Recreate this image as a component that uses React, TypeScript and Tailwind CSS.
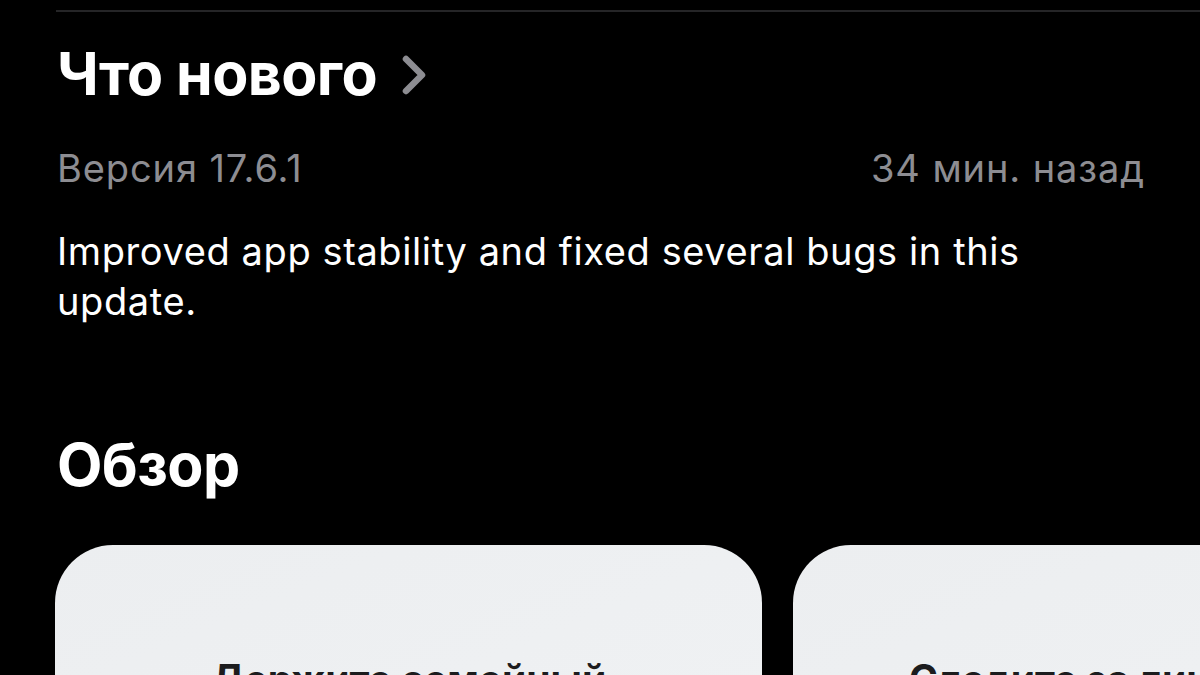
import React from 'react';

const font = { fontFamily: 'Inter, "Noto Sans", sans-serif' };

export default function App() {
  return (
    <div className="w-[1200px] h-[675px] overflow-hidden bg-black text-white" style={font}>
      <div className="ml-[56px] mt-[10px] h-[2px] bg-[#252527]" />

      <div className="pl-[57px] pr-[55px]">
        <div className="mt-[32px] flex items-center gap-[24px]">
          <h2 className="text-[59px] font-bold leading-[59px] tracking-[-0.6px]">Что нового</h2>
          <svg width="26" height="42" viewBox="0 0 26 42" className="mt-[3px]">
            <path d="M5 5 L21 21 L5 37" fill="none" stroke="#8d8d92" strokeWidth="6.5" strokeLinecap="round" strokeLinejoin="round" />
          </svg>
        </div>

        <div className="mt-[42px] flex items-center justify-between text-[38px] leading-[46px] tracking-[0.9px] text-[#8d8d92]">
          <span>Версия 17.6.1</span>
          <span>34 мин. назад</span>
        </div>

        <p className="mt-[35px] max-w-[1088px] text-[38px] leading-[50px] tracking-[0.6px] text-white">
          Improved app stability and fixed several bugs in this update.
        </p>

        <h2 className="mt-[109px] text-[59px] font-bold leading-[59px] tracking-[-0.6px]">Обзор</h2>
      </div>

      <div className="mt-[51px] flex gap-[31px] pl-[55px]">
        <div className="h-[300px] w-[707px] shrink-0 rounded-[58px] bg-gradient-to-br from-[#eceef0] to-[#f0f2f4] pt-[114px] text-center">
          <div className="text-[39px] font-bold leading-[39px] text-[#1c1c1e]">Держите семейный</div>
        </div>
        <div className="h-[300px] w-[707px] shrink-0 rounded-[58px] bg-gradient-to-br from-[#eceef0] to-[#f0f2f4] pt-[114px] pl-[116px]">
          <div className="whitespace-nowrap text-[39px] font-bold leading-[39px] text-[#1c1c1e]">Следите за личными</div>
        </div>
      </div>
    </div>
  );
}
